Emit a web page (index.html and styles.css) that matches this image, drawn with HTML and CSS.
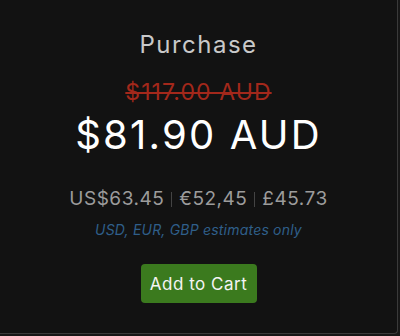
FILE: index.html
```html
<!DOCTYPE html>
<html>
<head>
<meta charset="utf-8">
<link rel="stylesheet" href="styles.css">
</head>
<body>
<div class="panel">
  <h2 class="title">Purchase</h2>
  <div class="old-price">$117.00 AUD</div>
  <div class="price">$81.90 AUD</div>
  <div class="alt-prices">
    <span>US$63.45</span><span class="sep"></span><span>€52,45</span><span class="sep"></span><span>£45.73</span>
  </div>
  <div class="note">USD, EUR, GBP estimates only</div>
  <button class="cart-btn">Add to Cart</button>
</div>
</body>
</html>
```

FILE: styles.css
```css
html, body {
  margin: 0;
  padding: 0;
  background: #171717;
}
body {
  width: 400px;
  height: 336px;
  overflow: hidden;
  font-family: Inter, "Open Sans", sans-serif;
}
.panel {
  box-sizing: border-box;
  width: 398px;
  height: 334px;
  background: #121212;
  border-right: 1px solid #3a3a3a;
  border-bottom: 1px solid #3a3a3a;
  border-bottom-right-radius: 4px;
  display: flex;
  flex-direction: column;
  align-items: center;
  padding-top: 29px;
}
.title {
  margin: 0;
  font-weight: 400;
  font-size: 24px;
  line-height: 32px;
  letter-spacing: 1.5px;
  color: #c9c9c9;
}
.old-price {
  margin-top: 16px;
  font-size: 23px;
  line-height: 30px;
  letter-spacing: 1.1px;
  color: #a3281b;
  text-decoration: line-through;
  text-decoration-thickness: 2px;
}
.price {
  margin-top: 2px;
  font-size: 40px;
  line-height: 52px;
  letter-spacing: 2.2px;
  color: #ffffff;
}
.alt-prices {
  margin-top: 25px;
  display: flex;
  align-items: center;
  font-size: 19px;
  line-height: 26px;
  letter-spacing: 0.5px;
  color: #9c9c9c;
}
.sep {
  width: 1px;
  height: 15px;
  background: #444;
  margin: 0 7px;
}
.note {
  margin-top: 8px;
  font-size: 14px;
  line-height: 20px;
  letter-spacing: 0.2px;
  font-style: italic;
  color: #2f5f8a;
}
.cart-btn {
  margin-top: 24px;
  width: 116px;
  height: 39px;
  border: none;
  border-radius: 4px;
  background: #3b7a1e;
  color: #f4f4f4;
  font-family: inherit;
  font-size: 17px;
  letter-spacing: 0.5px;
  padding: 0;
}
```
